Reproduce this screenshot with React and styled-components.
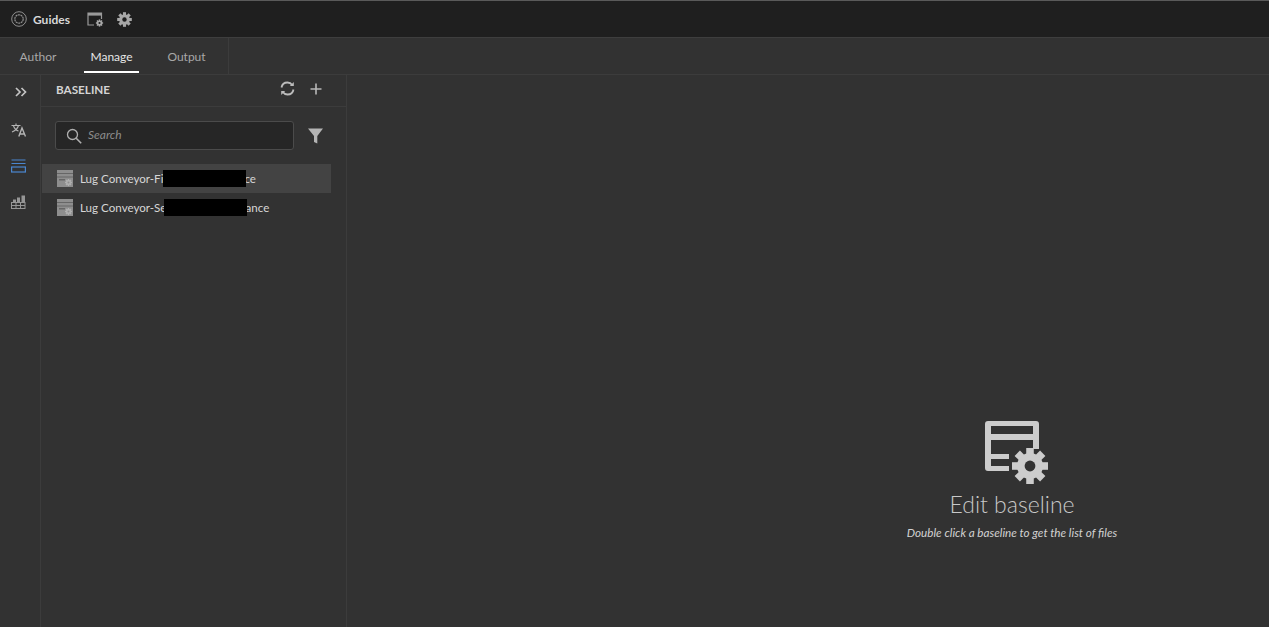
import styled, { createGlobalStyle } from 'styled-components'

const GlobalStyle = createGlobalStyle`
  html, body { margin: 0; padding: 0; height: 100%; background: #323232; overflow: hidden; }
  #root { height: 100%; }
  * { box-sizing: border-box; }
`

const Page = styled.div`
  height: 627px;
  display: flex;
  flex-direction: column;
  font-family: Lato, "Open Sans", sans-serif;
  color: #d0d0d0;
  background: #323232;
`

const TopBar = styled.div`
  height: 38px;
  flex: none;
  display: flex;
  align-items: center;
  padding-left: 11px;
  background: #1f1f1f;
  border-top: 1px solid #5a5a5a;
  border-bottom: 1px solid #3e3e3e;
`

const AppTitle = styled.span`
  width: 37px;
  font-size: 12px;
  font-weight: 700;
  color: #d8d8d8;
  margin-left: 6px;
  margin-right: 17px;
`

const TopIcon = styled.span`
  display: flex;
  margin-right: 13px;
`

const TabBar = styled.div`
  height: 37px;
  flex: none;
  display: flex;
  background: #323232;
  border-bottom: 1px solid #3c3c3c;
`

const TabGroup = styled.div`
  width: 229px;
  display: flex;
  padding-left: 20px;
  border-right: 1px solid #3c3c3c;
`

const Tab = styled.div`
  width: ${p => p.$w}px;
  display: flex;
  align-items: center;
  justify-content: center;
  padding-top: 3px;
  margin-bottom: 1px;
  margin-right: ${p => p.$gap || 0}px;
  font-size: 12px;
  white-space: nowrap;
  color: ${p => (p.$active ? '#e6e6e6' : '#a8a8a8')};
  border-bottom: 2px solid ${p => (p.$active ? '#ffffff' : 'transparent')};
`

const Body = styled.div`
  flex: 1;
  display: flex;
  min-height: 0;
`

const Rail = styled.div`
  width: 41px;
  flex: none;
  display: flex;
  flex-direction: column;
  align-items: center;
  padding-top: 8px;
  gap: 18px;
  border-right: 1px solid #3c3c3c;
`

const RailIcon = styled.span`
  display: flex;
  height: 18px;
  align-items: center;
  margin-left: ${p => p.$shift || 0}px;
  margin-right: 3px;
  margin-bottom: ${p => p.$after || 0}px;
`

const Panel = styled.div`
  width: 306px;
  flex: none;
  border-right: 1px solid #3c3c3c;
`

const PanelHeader = styled.div`
  height: 32px;
  display: flex;
  align-items: center;
  padding: 0 24px 4px 15px;
  border-bottom: 1px solid #3c3c3c;
`

const PanelTitle = styled.div`
  flex: 1;
  font-size: 11.7px;
  font-weight: 700;
  color: #d4d4d4;
`

const HeaderActions = styled.div`
  display: flex;
  align-items: center;
  gap: 15px;
`

const SearchRow = styled.div`
  display: flex;
  align-items: center;
  padding: 14px 22px 0 14px;
  gap: 14px;
`

const SearchBox = styled.div`
  width: 239px;
  height: 29px;
  display: flex;
  align-items: center;
  padding-left: 10px;
  gap: 6px;
  background: #262626;
  border: 1px solid #4b4b4b;
  border-radius: 3px;
`

const SearchText = styled.span`
  font-size: 12px;
  font-style: italic;
  color: #8c8c8c;
  margin-top: -2px;
`

const List = styled.div`
  margin-top: 14px;
  width: 289px;
  margin-left: 1px;
`

const Row = styled.div`
  height: 29px;
  display: flex;
  align-items: center;
  padding-left: 15px;
  background: ${p => (p.$selected ? '#434343' : 'transparent')};
`

const RowLabel = styled.span`
  margin-left: 7px;
  font-size: 11.6px;
  color: #d6d6d6;
  white-space: nowrap;
  display: flex;
  align-items: center;
`

const Redacted = styled.span`
  position: relative;
  display: inline-block;
  width: 83px;
  height: 17px;
  margin-left: ${p => p.$pull || 0}px;
  margin-right: -2px;
  background: #000;
`

const Main = styled.div`
  flex: 1;
  display: flex;
  padding: 345px 0 0 559px;
`

const EmptyState = styled.div`
  width: 212px;
  display: flex;
  flex-direction: column;
  align-items: center;
`

const EmptyTitle = styled.div`
  font-size: 23px;
  font-weight: 300;
  color: #c8c8c8;
  margin-top: 5px;
  line-height: 30px;
`

const EmptyHint = styled.div`
  font-size: 11.7px;
  font-style: italic;
  color: #d2d2d2;
  white-space: nowrap;
  margin-top: 6px;
`

const BigIconWrap = styled.span`
  display: flex;
  margin-left: 10px;
`

const Gear = ({ x, y, r, color, hole }) => {
  const teeth = [0, 45, 90, 135, 180, 225, 270, 315]
  const w = r * 0.42
  return (
    <g>
      {teeth.map(a => (
        <rect
          key={a}
          x={x - w / 2}
          y={y - r}
          width={w}
          height={r * 0.6}
          fill={color}
          transform={`rotate(${a} ${x} ${y})`}
        />
      ))}
      <circle cx={x} cy={y} r={r * 0.72} fill={color} />
      <circle cx={x} cy={y} r={r * 0.3} fill={hole} />
    </g>
  )
}

const LogoIcon = () => (
  <svg width="16" height="16" viewBox="0 0 16 16" fill="none" stroke="#8f8f8f">
    <circle cx="8" cy="8" r="7.3" strokeWidth="1" />
    <circle cx="8" cy="8" r="4.2" strokeWidth="1.2" strokeDasharray="2 0.6" />
  </svg>
)

const WindowGearIcon = () => (
  <svg width="17" height="15" viewBox="0 0 17 15" fill="none">
    <path d="M7 13H1V1h13.5v6" stroke="#9a9a9a" strokeWidth="1.2" />
    <rect x="1" y="1" width="13.5" height="2.6" fill="#9a9a9a" />
    <Gear x={12.5} y={11} r={3.6} color="#a8a8a8" hole="#1f1f1f" />
  </svg>
)

const ChevronsIcon = () => (
  <svg width="12" height="10" viewBox="0 0 12 10" fill="none" stroke="#c4c4c4" strokeWidth="1.7">
    <path d="M1 1l4 4-4 4M6.5 1l4 4-4 4" />
  </svg>
)

const TranslateIcon = () => (
  <svg width="15" height="14" viewBox="0 0 15 14" fill="none" stroke="#b4b4b4" strokeWidth="1.1">
    <path d="M0.500 2.500h9M5 0.500v2M7.500 2.500c-.8 3-3 5-6.500 6.500M2.500 3c1 2.500 3 4.500 5 5" />
    <path d="M7.800 13.500L11 5l3.500 8.500M9 11h4.500" strokeWidth="1.400" />
  </svg>
)

const ListIcon = () => (
  <svg width="15" height="14" viewBox="0 0 15 14" fill="none" stroke="#4a86cf" strokeWidth="1.2">
    <path d="M0.500 1h14M0.500 4.500h14" />
    <rect x="0.600" y="8" width="13.800" height="5" />
  </svg>
)

const TableChartIcon = () => (
  <svg width="15" height="14" viewBox="0 0 15 14" fill="none">
    <rect x="0.500" y="7.500" width="13.500" height="6" stroke="#969696" />
    <path d="M0.500 10.500h13.500M5 7.500v6M9.500 7.500v6" stroke="#969696" />
    <rect x="2" y="4.500" width="3" height="3" fill="#969696" />
    <rect x="6" y="2.500" width="3" height="5" fill="#969696" />
    <rect x="10.500" y="0.500" width="3.500" height="7" fill="#969696" />
  </svg>
)

const RefreshIcon = () => (
  <svg width="15" height="15" viewBox="0 0 15 15" fill="none" stroke="#bcbcbc" strokeWidth="1.800">
    <path d="M1.500 6.500C2 3.500 4.500 1.500 7.500 1.500c2 0 3.600.9 4.700 2.500" />
    <path d="M13.500 8.500c-.5 3-3 5-6 5-2 0-3.600-.9-4.700-2.500" />
    <path d="M13.800 1v4h-4z" fill="#bcbcbc" stroke="none" />
    <path d="M1.200 14v-4h4z" fill="#bcbcbc" stroke="none" />
  </svg>
)

const PlusIcon = () => (
  <svg width="12" height="12" viewBox="0 0 12 12" stroke="#b8b8b8" strokeWidth="1.600">
    <path d="M6 0.500v11M0.500 6h11" />
  </svg>
)

const SearchIcon = () => (
  <svg width="16" height="16" viewBox="0 0 16 16" fill="none" stroke="#b0b0b0" strokeWidth="1.300">
    <circle cx="6.500" cy="6.500" r="5" />
    <path d="M10.200 10.200l5 5" strokeWidth="1.600" />
  </svg>
)

const FilterIcon = () => (
  <svg width="15" height="16" viewBox="0 0 15 16" fill="#b4b4b4">
    <path d="M0 0.500h15L9.300 8v7.500L6 14V8z" />
  </svg>
)

const BaselineThumb = () => (
  <svg width="16" height="17" viewBox="0 0 16 17">
    <rect width="16" height="17" fill="#8e8e8e" />
    <path d="M0 3.500h16M0 7h16" stroke="#666666" strokeWidth="1" />
    <rect x="2" y="9" width="6" height="1.500" fill="#666666" />
    <Gear x={11.500} y={12.500} r={3.500} color="#b0b0b0" hole="#8e8e8e" />
  </svg>
)

const BaselineIcon = () => (
  <svg width="64" height="64" viewBox="0 0 64 64" fill="#cccccc">
    <path d="M3 1h48a3 3 0 0 1 3 3v25h-6V6H6v40h18v5H3a3 3 0 0 1-3-3V4a3 3 0 0 1 3-3z" />
    <rect x="3" y="14" width="48" height="6" />
    <rect x="3" y="34" width="21" height="5" />
    <Gear x={45} y={46} r={18} color="#cccccc" hole="#323232" />
  </svg>
)

export default function App() {
  return (
    <Page>
      <GlobalStyle />
      <TopBar>
        <LogoIcon />
        <AppTitle>Guides</AppTitle>
        <TopIcon><WindowGearIcon /></TopIcon>
        <TopIcon>
          <svg width="15" height="15" viewBox="0 0 15 15">
            <Gear x={7.500} y={7.500} r={7.300} color="#a8a8a8" hole="#1f1f1f" />
          </svg>
        </TopIcon>
      </TopBar>
      <TabBar>
        <TabGroup>
          <Tab $w={36} $gap={28}>Author</Tab>
          <Tab $w={55} $gap={29} $active>Manage</Tab>
          <Tab $w={37}>Output</Tab>
        </TabGroup>
      </TabBar>
      <Body>
        <Rail>
          <RailIcon $shift={5} $after={2}><ChevronsIcon /></RailIcon>
          <RailIcon><TranslateIcon /></RailIcon>
          <RailIcon><ListIcon /></RailIcon>
          <RailIcon><TableChartIcon /></RailIcon>
        </Rail>
        <Panel>
          <PanelHeader>
            <PanelTitle>BASELINE</PanelTitle>
            <HeaderActions>
              <RefreshIcon />
              <PlusIcon />
            </HeaderActions>
          </PanelHeader>
          <SearchRow>
            <SearchBox>
              <SearchIcon />
              <SearchText>Search</SearchText>
            </SearchBox>
            <FilterIcon />
          </SearchRow>
          <List>
            <Row $selected>
              <BaselineThumb />
              <RowLabel>Lug Conveyor-Fi<Redacted />ce</RowLabel>
            </Row>
            <Row>
              <BaselineThumb />
              <RowLabel>Lug Conveyor-Se<Redacted $pull={-2} />ance</RowLabel>
            </Row>
          </List>
        </Panel>
        <Main>
          <EmptyState>
            <BigIconWrap><BaselineIcon /></BigIconWrap>
            <EmptyTitle>Edit baseline</EmptyTitle>
            <EmptyHint>Double click a baseline to get the list of files</EmptyHint>
          </EmptyState>
        </Main>
      </Body>
    </Page>
  )
}
